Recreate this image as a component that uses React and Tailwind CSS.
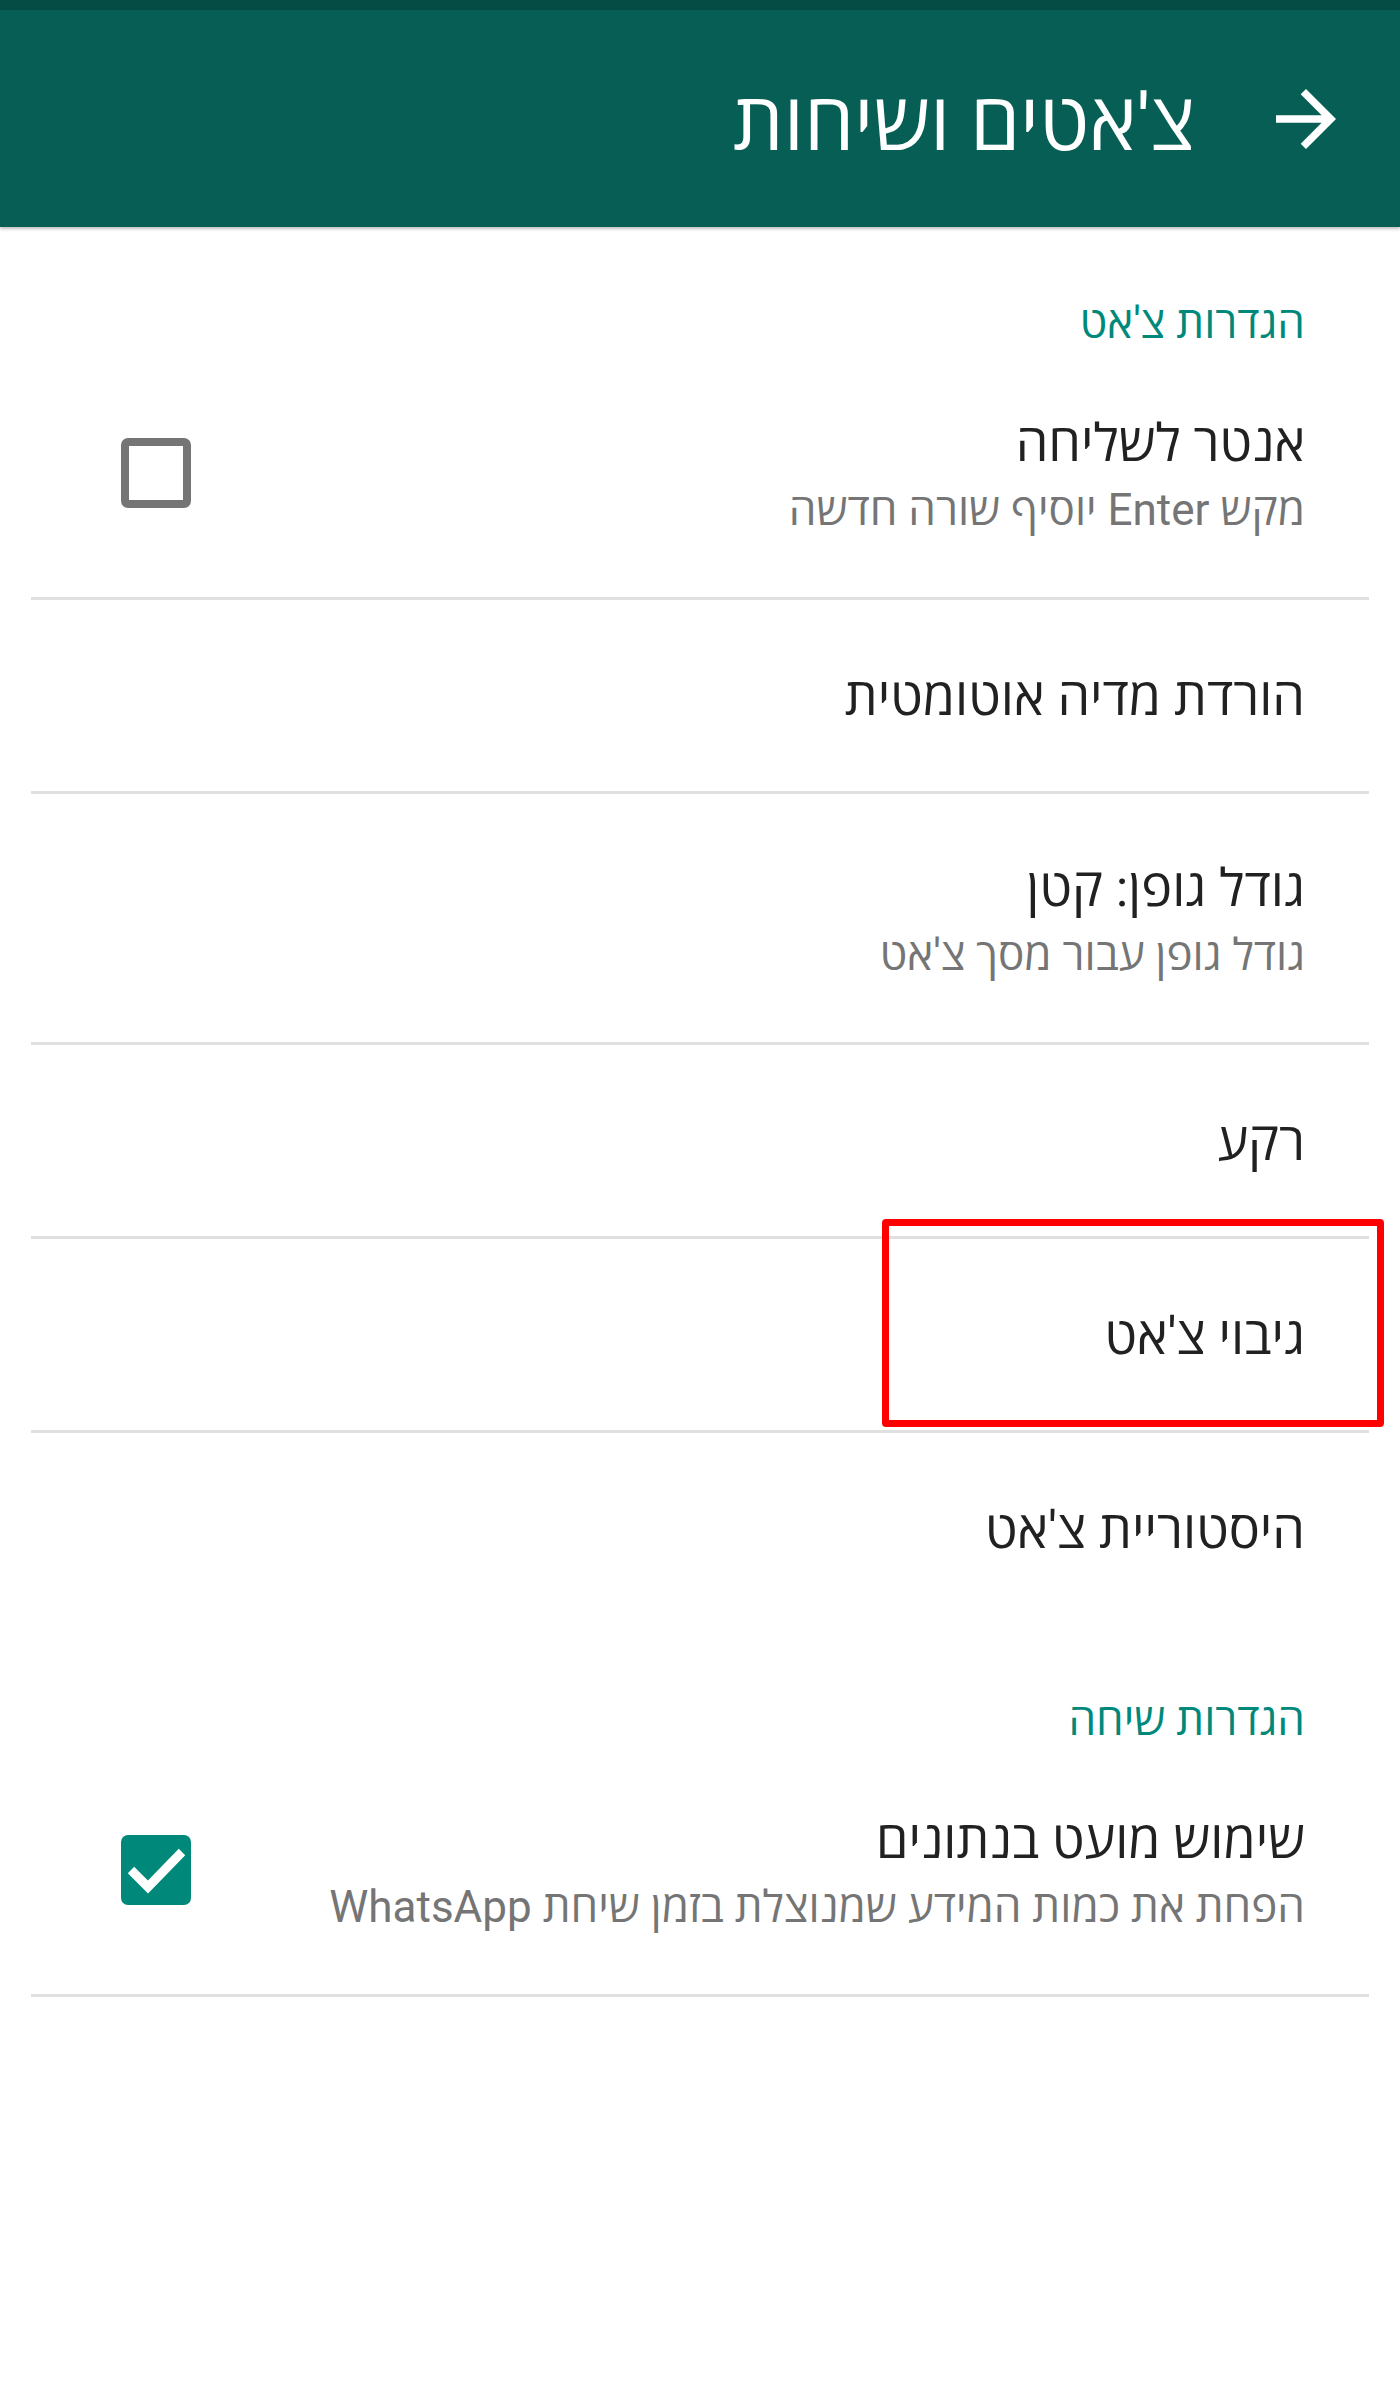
import React from "react";

const font = { fontFamily: "Roboto, 'Open Sans', 'Noto Sans', 'DejaVu Sans', sans-serif" };

function Checkbox({ checked }) {
  if (checked) {
    return (
      <div className="w-[70px] h-[70px] rounded-[7px] bg-[#00897b] flex items-center justify-center flex-shrink-0">
        <svg width="70" height="70" viewBox="0 0 70 70">
          <path d="M10 35 L27 52 L61 17" fill="none" stroke="#ffffff" strokeWidth="9" />
        </svg>
      </div>
    );
  }
  return <div className="w-[70px] h-[70px] rounded-[7px] border-[8px] border-[#757575] flex-shrink-0" />;
}

function Category({ children }) {
  return (
    <div className="h-[122px] flex items-end pr-[64px] pb-[0px]">
      <div className="text-[44px] leading-[52px] text-[#00897b]">{children}</div>
    </div>
  );
}

function Divider() {
  return <div className="h-[3px] bg-[#e0e0e0]" />;
}

function Row({ title, summary, checkbox, divider = true }) {
  return (
    <div>
      {summary ? (
        <div className="h-[248px] flex items-center justify-between pr-[64px] pl-[90px]">
          <div className="flex flex-col pt-[8px]">
            <div className="text-[52px] leading-[62px] text-[#212121]">{title}</div>
            <div className="text-[44px] leading-[62px] mt-1 text-[#757575]">{summary}</div>
          </div>
          {checkbox !== undefined && <Checkbox checked={checkbox} />}
        </div>
      ) : (
        <div className="h-[191px] flex items-center pr-[64px] pt-[4px]">
          <div className="text-[52px] leading-[62px] text-[#212121]">{title}</div>
        </div>
      )}
      {divider && <Divider />}
    </div>
  );
}

export default function App() {
  return (
    <div dir="rtl" style={font} className="w-[1400px] min-h-[2402px] bg-white relative">
      <div className="h-[10px] bg-[#054d44]" />
      <header className="h-[217px] bg-[#075e54] flex items-center pr-[49px] shadow-[0_2px_3px_rgba(0,0,0,0.25)] relative">
        <svg width="90" height="90" viewBox="0 0 24 24" className="flex-shrink-0">
          <path fill="#ffffff" d="M12 4l-1.41 1.41L16.17 11H4v2h12.17l-5.58 5.59L12 20l8-8z" />
        </svg>
        <h1 className="mr-[66px] mt-[8px] text-[80px] leading-[90px] text-white font-normal">צ'אטים ושיחות</h1>
      </header>

      <div className="px-[31px]">
        <Category>הגדרות צ'אט</Category>
        <Row title="אנטר לשליחה" summary="מקש Enter יוסיף שורה חדשה" checkbox={false} />
        <Row title="הורדת מדיה אוטומטית" />
        <Row title="גודל גופן: קטן" summary="גודל גופן עבור מסך צ'אט" />
        <Row title="רקע" />
        <Row title="גיבוי צ'אט" />
        <Row title="היסטוריית צ'אט" divider={false} />
        <Category>הגדרות שיחה</Category>
        <Row title="שימוש מועט בנתונים" summary="הפחת את כמות המידע שמנוצלת בזמן שיחת WhatsApp" checkbox={true} />
      </div>

      {/* annotation box */}
      <div className="absolute left-[882px] top-[1219px] w-[502px] h-[208px] border-[7px] border-[#ff0000] rounded-[4px]" />
    </div>
  );
}
